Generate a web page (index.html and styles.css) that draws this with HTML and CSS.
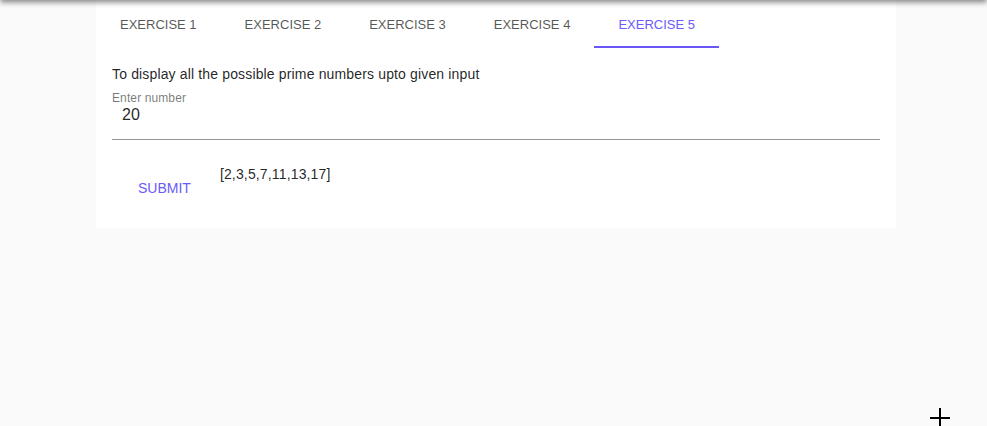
FILE: index.html
```html
<!DOCTYPE html>
<html lang="en">
<head>
<meta charset="utf-8">
<title>Exercises</title>
<link rel="stylesheet" href="styles.css">
</head>
<body>
<div class="appbar-shadow"></div>
<main class="card">
  <nav class="tabs">
    <button class="tab">Exercise 1</button>
    <button class="tab">Exercise 2</button>
    <button class="tab">Exercise 3</button>
    <button class="tab">Exercise 4</button>
    <button class="tab active">Exercise 5</button>
  </nav>
  <section class="content">
    <p class="desc">To display all the possible prime numbers upto given input</p>
    <div class="field">
      <label class="label">Enter number</label>
      <div class="input">20</div>
    </div>
    <div class="actions">
      <button class="submit">Submit</button>
      <div class="result">[2,3,5,7,11,13,17]</div>
    </div>
  </section>
</main>
<svg class="cursor" width="24" height="24" viewBox="0 0 24 24">
  <path d="M12 2 V22 M2 12 H22" stroke="#fff" stroke-width="4" opacity="0.6"/>
  <path d="M12 2 V22 M2 12 H22" stroke="#000" stroke-width="2"/>
</svg>
</body>
</html>
```
FILE: styles.css
```css
html, body {
  margin: 0;
  padding: 0;
  background: #fafafa;
  font-family: "Liberation Sans", Arial, Helvetica, sans-serif;
  color: rgba(0, 0, 0, 0.87);
  height: 100%;
  overflow: hidden;
}

.appbar-shadow {
  position: fixed;
  top: -10px;
  left: 0;
  right: 0;
  height: 10px;
  box-shadow: 0 2px 4px -1px rgba(0,0,0,0.3), 0 4px 5px 0 rgba(0,0,0,0.18), 0 1px 10px 0 rgba(0,0,0,0.12);
  background: #9e9e9e;
  z-index: 10;
}

.card {
  width: 800px;
  margin: 0 0 0 96px;
  background: #fff;
  padding-bottom: 22px;
}

.tabs {
  display: flex;
  height: 48px;
}

.tab {
  width: 124.6px;
  height: 48px;
  border: 0;
  background: none;
  padding: 0;
  font-family: inherit;
  font-size: 13px;
  font-weight: 400;
  text-transform: uppercase;
  color: rgba(0, 0, 0, 0.68);
  border-bottom: 2px solid transparent;
  padding-top: 2px;
}

.tab.active {
  color: #6a5af9;
  border-bottom-color: #6a56f5;
}

.content {
  padding: 0 16px;
}

.desc {
  margin: 16px 0 0;
  font-size: 14px;
  line-height: 20px;
  letter-spacing: 0.15px;
}

.field {
  display: flex;
  flex-direction: column;
  margin-top: 7px;
  border-bottom: 1px solid rgba(0, 0, 0, 0.42);
}

.label {
  font-size: 12px;
  line-height: 14px;
  letter-spacing: 0.11px;
  color: rgba(0, 0, 0, 0.54);
}

.input {
  font-size: 16px;
  line-height: 19px;
  height: 19px;
  padding: 0 0 15px 10px;
  letter-spacing: 0.15px;
}

.actions {
  display: flex;
  align-items: flex-start;
  margin-top: 24px;
  padding-left: 10px;
}

.submit {
  margin-top: 6px;
  height: 36px;
  padding: 0 16px;
  border: 0;
  background: none;
  font-family: inherit;
  font-size: 14px;
  font-weight: 400;
  text-transform: uppercase;
  color: #6a5af9;
}

.result {
  margin-left: 13px;
  font-size: 14px;
  line-height: 20px;
  letter-spacing: 0.15px;
}

.cursor {
  position: fixed;
  left: 928px;
  top: 406px;
}
```
